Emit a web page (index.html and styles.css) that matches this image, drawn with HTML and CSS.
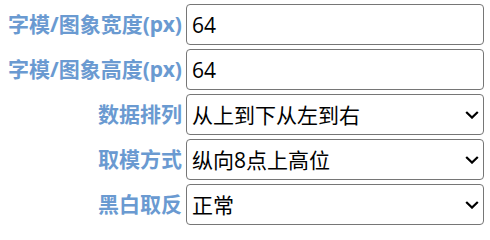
FILE: index.html
```html
<!DOCTYPE html>
<html lang="zh-CN">
<head>
<meta charset="utf-8">
<title>取模设置</title>
<link rel="stylesheet" href="styles.css">
</head>
<body>
<form class="settings">
  <label class="label" for="w">字模/图象宽度(px)</label>
  <input class="field" id="w" type="text" value="64">
  <label class="label" for="h">字模/图象高度(px)</label>
  <input class="field" id="h" type="text" value="64">
  <label class="label" for="order">数据排列</label>
  <select class="field select" id="order"><option>从上到下从左到右</option></select>
  <label class="label" for="mode">取模方式</label>
  <select class="field select" id="mode"><option>纵向8点上高位</option></select>
  <label class="label" for="inv">黑白取反</label>
  <select class="field select" id="inv"><option>正常</option></select>
</form>
</body>
</html>
```

FILE: styles.css
```css
html, body {
  margin: 0;
  padding: 0;
  background: #ffffff;
}

.settings {
  display: grid;
  grid-template-columns: auto 1fr;
  grid-auto-rows: 41px;
  column-gap: 4px;
  row-gap: 4px;
  padding: 4px 6px 0 8px;
  font-family: "Noto Sans", "Noto Sans CJK SC", sans-serif;
}

.label {
  align-self: center;
  text-align: right;
  font-size: 21px;
  font-weight: 700;
  color: #6a9ad1;
  line-height: 1;
  white-space: nowrap;
}

.field {
  box-sizing: border-box;
  width: 100%;
  height: 41px;
  margin: 0;
  padding: 0 5px;
  border: 1px solid #767676;
  border-radius: 4px;
  background-color: #ffffff;
  color: #000000;
  font-family: "Open Sans", "Noto Sans CJK SC", sans-serif;
  font-size: 21px;
  outline: none;
}

.select {
  appearance: none;
  -webkit-appearance: none;
  padding-right: 30px;
  background-image: url("data:image/svg+xml;utf8,<svg xmlns='http://www.w3.org/2000/svg' width='14' height='8' viewBox='0 0 14 8'><path d='M1.2 1 L7 6.6 L12.8 1' fill='none' stroke='%23000' stroke-width='2.2'/></svg>");
  background-repeat: no-repeat;
  background-position: right 4px center;
  background-size: 14px 8px;
}
```
